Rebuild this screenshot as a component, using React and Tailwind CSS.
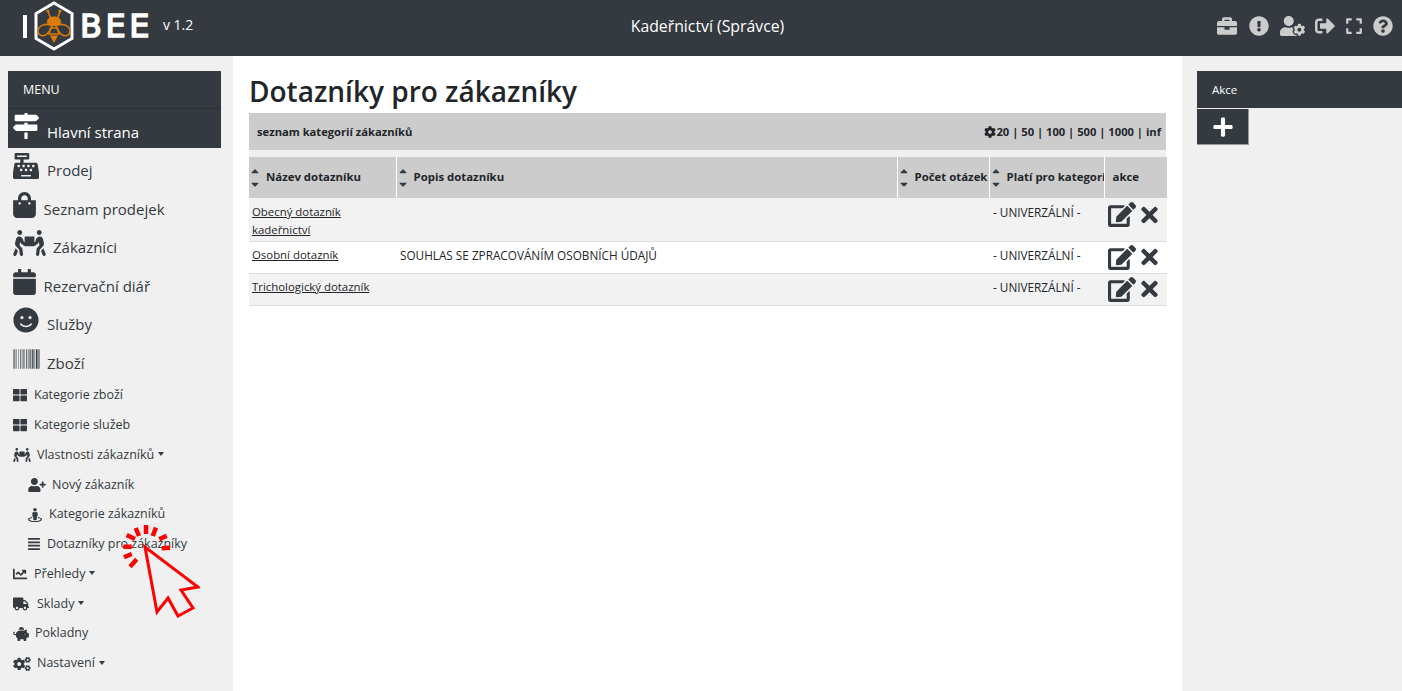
import {
  FaBarcode, FaBriefcase, FaCalendar, FaCashRegister, FaChartLine, FaCog, FaCogs, FaEdit,
  FaExclamationCircle, FaExpand, FaAlignJustify, FaMapSigns, FaPeopleCarry, FaPiggyBank, FaPlus,
  FaQuestionCircle, FaShoppingBag, FaSignOutAlt, FaSmile, FaStreetView, FaThLarge, FaTimes,
  FaTruck, FaUserCog, FaUserPlus, FaSortUp, FaSortDown,
} from "react-icons/fa";

const Caret = () => (
  <span className="inline-block ml-1 mb-[2px] align-middle border-t-4 border-x-[3.5px] border-x-transparent border-t-[#343a40]" />
);

const bigItems = [
  { icon: FaCashRegister, w: "w-[26px]", gap: "ml-[8px]", label: "Prodej" },
  { icon: FaShoppingBag, w: "w-[23px]", gap: "ml-[7.5px]", label: "Seznam prodejek" },
  { icon: FaPeopleCarry, w: "w-[33px]", gap: "ml-[7px]", label: "Zákazníci" },
  { icon: FaCalendar, w: "w-[23px]", gap: "ml-[7.5px]", label: "Rezervační diář" },
  { icon: FaSmile, w: "w-[26px]", gap: "ml-[8px]", label: "Služby" },
  { icon: FaBarcode, w: "w-[27px]", gap: "ml-[7px]", label: "Zboží" },
];

const smallItems = [
  { icon: FaThLarge, pad: "pl-[5px]", w: "w-[14px]", gap: "ml-[7px]", label: "Kategorie zboží" },
  { icon: FaThLarge, pad: "pl-[5px]", w: "w-[14px]", gap: "ml-[7px]", label: "Kategorie služeb" },
  { icon: FaPeopleCarry, pad: "pl-[5px]", w: "w-[18px]", gap: "ml-[6px]", label: "Vlastnosti zákazníků", caret: true },
  { icon: FaUserPlus, pad: "pl-[20px]", w: "w-[18px]", gap: "ml-[6px]", label: "Nový zákazník" },
  { icon: FaStreetView, pad: "pl-[20px]", w: "w-[14px]", gap: "ml-[7px]", label: "Kategorie zákazníků" },
  { icon: FaAlignJustify, pad: "pl-[20px]", w: "w-[12px]", gap: "ml-[7px]", label: "Dotazníky pro zákazníky" },
  { icon: FaChartLine, pad: "pl-[5px]", w: "w-[14px]", gap: "ml-[7px]", label: "Přehledy", caret: true },
  { icon: FaTruck, pad: "pl-[5px]", w: "w-[16px]", gap: "ml-[8px]", label: "Sklady", caret: true },
  { icon: FaPiggyBank, pad: "pl-[5px]", w: "w-[16px]", gap: "ml-[6px]", label: "Pokladny" },
  { icon: FaCogs, pad: "pl-[5px]", w: "w-[18px]", gap: "ml-[6px]", label: "Nastavení", caret: true },
];

const columns = [
  { label: "Název dotazníku", w: "w-[147px]", sort: true },
  { label: "Popis dotazníku", w: "w-[501px]", sort: true },
  { label: "Počet otázek", w: "w-[92px]", sort: true },
  { label: "Platí pro kategorii", w: "w-[115px]", sort: true },
  { label: "akce", w: "w-[63px]" },
];

const rows = [
  { name: "Obecný dotazník kadeřnictví", desc: "", h: "h-[43px]", bg: "bg-[#f2f2f2]", pt: "pt-[5px]", iconPt: "pt-[4px]" },
  { name: "Osobní dotazník", desc: "SOUHLAS SE ZPRACOVÁNÍM OSOBNÍCH ÚDAJŮ", h: "h-[32px]", bg: "bg-white", pt: "pt-[4px]", iconPt: "pt-[3px]" },
  { name: "Trichologický dotazník", desc: "", h: "h-[32px]", bg: "bg-[#f2f2f2]", pt: "pt-[4px]", iconPt: "pt-[3px]" },
];

const Logo = () => (
  <div className="flex items-center ml-[23px] mb-[4px] text-white">
    <span className="w-[4px] h-[23px] bg-white" />
    <svg viewBox="0 0 42 50" className="w-[42px] h-[50px] ml-[6px]">
      <path d="M21 2 L39 12.5 L39 37.5 L21 48 L3 37.5 L3 12.5 Z" fill="none" stroke="#fff" strokeWidth="3" />
      <g fill="none" stroke="#dd7b0a" strokeWidth="1.6">
        <path d="M15 10.5 L17.5 17 M27 10.5 L24.5 17" />
        <path d="M18 24 C12 22 5 25 5 30 C5 35 11 36 14 33 C16 31 18 28 19 26 Z" />
        <path d="M24 24 C30 22 37 25 37 30 C37 35 31 36 28 33 C26 31 24 28 23 26 Z" />
      </g>
      <circle cx="15" cy="10" r="1.6" fill="#dd7b0a" />
      <circle cx="27" cy="10" r="1.6" fill="#dd7b0a" />
      <path d="M14 21 C14 17 18 15.5 21 15.5 C24 15.5 28 17 28 21 C28 24 24 25 21 25 C18 25 14 24 14 21 Z" fill="#dd7b0a" />
      <path d="M17.5 27 L24.5 27 L26 33 L16 33 Z" fill="none" stroke="#dd7b0a" strokeWidth="1.5" />
      <path d="M17 34.5 L25 34.5 L21 42 Z" fill="#dd7b0a" />
    </svg>
    <span className="ml-[5px] font-['DejaVu_Sans'] text-[32px] leading-none tracking-[3.5px] [-webkit-text-stroke:1.5px_white]">BEE</span>
    <span className="ml-[10px] mb-[3px] text-[14px]">v 1.2</span>
  </div>
);

const SortArrows = () => (
  <span className="relative inline-block w-[10px] h-[20px] shrink-0 text-[#343a40]">
    <FaSortUp className="absolute left-0 top-0 w-[10px] h-[12px]" />
    <FaSortDown className="absolute left-0 bottom-0 w-[10px] h-[12px]" />
  </span>
);

const Cursor = () => (
  <svg viewBox="0 0 80 100" className="absolute left-[120px] top-[522px] w-[80px] h-[100px]">
    <path d="M25 25 L37 90 L48 76 L58 94 L73 86 L61 68 L78 65 Z" fill="none" stroke="#f00" strokeWidth="3" />
    <g stroke="#f00" strokeWidth="4.5">
      <path d="M26 3 L26 12 M15.7 6 L19 14 M36 5.7 L32.7 14 M6.7 13 L15 17 M46.7 13.7 L39.3 17.3 M3.3 24.7 L11.7 24.7 M41.7 26.3 L50 25.7 M4 35.3 L11.7 32 M10 44.7 L16.7 37.3" />
    </g>
  </svg>
);

const App = () => {
  return (
    <div className="relative w-[1402px] h-[691px] overflow-hidden bg-white font-['Open_Sans','Noto_Sans',sans-serif] text-[#212529]">
      <header className="h-[56px] bg-[#343a40] flex items-center relative">
        <Logo />
        <div className="absolute left-0 right-0 text-center text-white text-[15.8px] pl-[13px] mb-[2px]">Kadeřnictví (Správce)</div>
        <div className="ml-auto flex items-center text-[#cccccc] pr-[9px] mb-[4px]">
          <FaBriefcase className="w-[20px] h-[20px]" />
          <FaExclamationCircle className="w-[20px] h-[20px] ml-[12px]" />
          <FaUserCog className="w-[25px] h-[20px] ml-[11px]" />
          <FaSignOutAlt className="w-[20px] h-[20px] ml-[10px]" />
          <FaExpand className="w-[18px] h-[18px] ml-[10px]" />
          <FaQuestionCircle className="w-[20px] h-[20px] ml-[10px]" />
        </div>
      </header>

      <div className="flex h-[635px]">
        <aside className="w-[233px] bg-[#f0f0f0] pt-[15px] pl-[8px] pr-[12px]">
          <div className="h-[38px] bg-[#343a40] border-b border-[#2c3136] text-white text-[12.5px] flex items-center pl-[15px] pt-[2px]">MENU</div>
          <div className="h-[38.6px] bg-[#343a40] text-white flex items-center pl-[5px]">
            <FaMapSigns className="w-[26px] h-[26px] mb-[4px]" />
            <span className="ml-[8px] mt-[7px] text-[15px]">Hlavní strana</span>
          </div>
          {bigItems.map((item) => (
            <div key={item.label} className="h-[38.5px] flex items-center pl-[5px] text-[#343a40]">
              <item.icon className={`${item.w} h-[26px] mb-[1px]`} />
              <span className={`${item.gap} mt-[7px] text-[15px]`}>{item.label}</span>
            </div>
          ))}
          <div className="pt-[2px]">
            {smallItems.map((item) => (
              <div key={item.label} className={`h-[29.8px] flex items-center text-[#343a40] text-[12.5px] whitespace-nowrap ${item.pad}`}>
                <item.icon className={`${item.w} h-[14px]`} />
                <span className={item.gap}>{item.label}</span>
                {item.caret && <Caret />}
              </div>
            ))}
          </div>
        </aside>

        <main className="w-[949px] px-[16px]">
          <h1 className="mt-[14px] mb-[1px] h-[42px] text-[28px] font-semibold leading-[42px]">Dotazníky pro zákazníky</h1>
          <div className="h-[37px] bg-[#cccccc] flex items-center justify-between pl-[8px] pr-[5px] pt-[1px] text-[11.2px] font-bold">
            <span>seznam kategorií zákazníků</span>
            <span className="flex items-center">
              <FaCog className="w-[12px] h-[12px]" />
              20 | 50 | 100 | 500 | 1000 | inf
            </span>
          </div>
          <div className="h-[7px] bg-[#f0f0f0]" />
          <table className="w-[918px] table-fixed border-collapse text-[11.4px]">
            <thead>
              <tr className="h-[41px] bg-[#cccccc]">
                {columns.map((col) => (
                  <th key={col.label} className={`${col.w} border-r border-white last:border-r-0 p-0 font-bold text-left`}>
                    <div className={`flex items-center overflow-hidden whitespace-nowrap ${col.sort ? "pl-[1px]" : "pl-[8px]"}`}>
                      {col.sort && <SortArrows />}
                      <span className={col.sort ? "ml-[6px] mb-[2px]" : "mb-[2px]"}>{col.label}</span>
                    </div>
                  </th>
                ))}
              </tr>
            </thead>
            <tbody>
              {rows.map((row) => (
                <tr key={row.name} className={`${row.h} ${row.bg} border-b border-[#dddddd]`}>
                  <td className={`align-top px-[3px] leading-[18px] ${row.pt}`}>
                    <a href="#" className="underline">{row.name}</a>
                  </td>
                  <td className={`align-top px-[4px] leading-[18px] text-[11.75px] ${row.pt}`}>{row.desc}</td>
                  <td />
                  <td className={`align-top px-[4px] leading-[18px] text-[11.75px] ${row.pt}`}>- UNIVERZÁLNÍ -</td>
                  <td className={`align-top pl-[4px] ${row.iconPt}`}>
                    <div className="flex items-center text-[#343a40]">
                      <FaEdit className="w-[28px] h-[25px]" />
                      <FaTimes className="w-[19px] h-[24px] ml-[4px]" />
                    </div>
                  </td>
                </tr>
              ))}
            </tbody>
          </table>
        </main>

        <aside className="w-[220px] bg-[#f0f0f0] pt-[15px] pl-[15px]">
          <div className="h-[37px] bg-[#343a40] text-white text-[11.5px] flex items-center pl-[15px]">Akce</div>
          <div className="mt-[1px] w-[52px] h-[36px] bg-[#343a40] border-r border-b border-[#999999] flex items-center justify-center text-white">
            <FaPlus className="w-[22px] h-[22px]" />
          </div>
        </aside>
      </div>

      <Cursor />
    </div>
  );
};

export default App;
